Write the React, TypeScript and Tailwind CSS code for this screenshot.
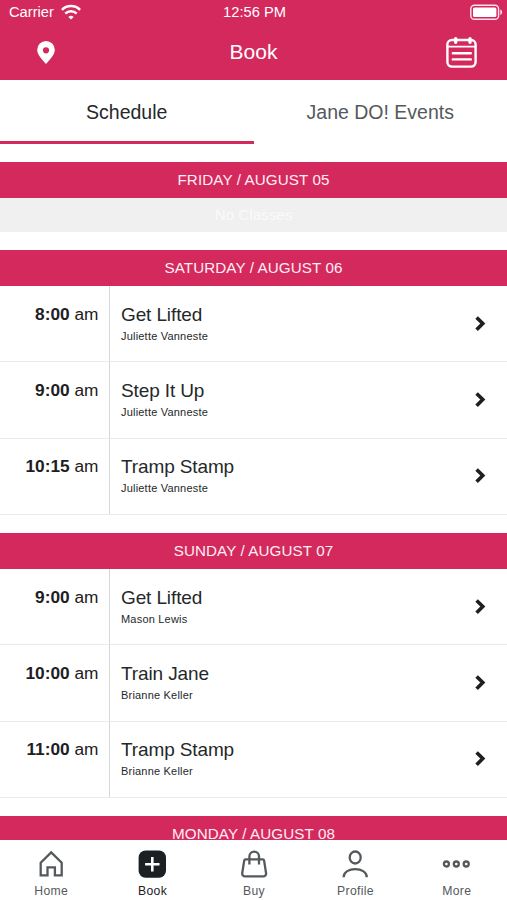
type ClassItem = {
    time: string;
    title: string;
    teacher: string;
}

type Day = {
    label: string;
    classes: ClassItem[];
}

const days: Day[] = [
    { label: 'FRIDAY / AUGUST 05', classes: [] },
    {
        label: 'SATURDAY / AUGUST 06',
        classes: [
            { time: '8:00', title: 'Get Lifted', teacher: 'Juliette Vanneste' },
            { time: '9:00', title: 'Step It Up', teacher: 'Juliette Vanneste' },
            { time: '10:15', title: 'Tramp Stamp', teacher: 'Juliette Vanneste' },
        ],
    },
    {
        label: 'SUNDAY / AUGUST 07',
        classes: [
            { time: '9:00', title: 'Get Lifted', teacher: 'Mason Lewis' },
            { time: '10:00', title: 'Train Jane', teacher: 'Brianne Keller' },
            { time: '11:00', title: 'Tramp Stamp', teacher: 'Brianne Keller' },
        ],
    },
]

function WifiIcon() {
    return (
        <svg className="w-5 h-4" viewBox="0 0 20 16" fill="none" stroke="white" strokeWidth="2.5">
            <path d="M0.9 5.8a13 13 0 0 1 18.2 0" />
            <path d="M4.3 9.6a8.1 8.1 0 0 1 11.4 0" />
            <path d="M10 15.6l-2.7-2.6a3.8 3.8 0 0 1 5.4 0z" fill="white" stroke="none" />
        </svg>
    )
}

function BatteryIcon() {
    return (
        <svg className="w-[33px] h-4" viewBox="0 0 33 16" fill="none">
            <rect x="0.8" y="1.3" width="27.8" height="14" rx="3.6" stroke="#ffe3ee" strokeWidth="1.4" />
            <rect x="3" y="3.5" width="23.4" height="9.6" rx="1.5" fill="white" />
            <path d="M30.3 5.5c2.4 0.8 2.4 4.6 0 5.4z" fill="#ffe3ee" />
        </svg>
    )
}

function PinIcon() {
    return (
        <svg className="w-[18px] h-[23px]" viewBox="0 0 18 23" fill="white" fillRule="evenodd">
            <path d="M9 0A8.8 8.8 0 0 0 .2 8.8C.2 14 5 18.5 9 23c4-4.5 8.8-9 8.8-14.2A8.8 8.8 0 0 0 9 0zM9 6.2a3.1 3.1 0 1 1 0 6.2a3.1 3.1 0 0 1 0-6.2z" />
        </svg>
    )
}

function CalendarIcon() {
    return (
        <svg className="w-[31px] h-[31px]" viewBox="0 0 31 31" fill="none" stroke="white" strokeWidth="2.4" strokeLinecap="round">
            <rect x="1.4" y="3" width="28.2" height="26.6" rx="4.5" />
            <path d="M1.4 9.6h28.2" strokeWidth="1.8" />
            <path d="M9.7 1.8v3.4M24 1.8v3.4" strokeWidth="3.4" />
            <path d="M6.8 16.2h18M6.8 22.4h18" />
        </svg>
    )
}

function ChevronIcon() {
    return (
        <svg className="w-3 h-4" viewBox="0 0 12 16" fill="none" stroke="#1d2023" strokeWidth="3.6">
            <path d="M1.6 1.4L7.8 7.6L1.6 13.8" />
        </svg>
    )
}

function StatusBar() {
    return (
        <div className="h-6 flex items-center justify-between pl-[9px] pr-1 text-[14.7px]">
            <div className="flex-1 flex items-center gap-[7px]">
                <span>Carrier</span>
                <WifiIcon />
            </div>
            <span className="pr-[3px]">12:56 PM</span>
            <div className="flex-1 flex justify-end">
                <BatteryIcon />
            </div>
        </div>
    )
}

function Header() {
    return (
        <header className="h-20 shrink-0 bg-[#d4295d] text-white">
            <StatusBar />
            <div className="h-14 flex items-center justify-between pl-[37px] pr-[30px]">
                <div className="flex-1">
                    <PinIcon />
                </div>
                <h1 className="text-[21px] pr-[7px]">Book</h1>
                <div className="flex-1 flex justify-end">
                    <CalendarIcon />
                </div>
            </div>
        </header>
    )
}

function Tabs() {
    return (
        <div className="h-16 shrink-0 flex text-[19.5px] text-center leading-[60px]">
            <button className="w-1/2 h-16 pt-0.5 border-b-[3px] border-[#d4295d] text-[#25282b]">Schedule</button>
            <button className="w-1/2 h-16 pt-0.5 border-b-[3px] border-transparent text-[#54595c]">Jane DO! Events</button>
        </div>
    )
}

function DayHeader({ label }: { label: string }) {
    return (
        <h2 className="h-9 bg-[#d4295d] text-[#ffeef4] text-center text-[15.2px] tracking-[0.1px] leading-9">{label}</h2>
    )
}

function ClassRow({ item }: { item: ClassItem }) {
    return (
        <div className="h-[76.2px] flex border-b border-[#e9eaeb]">
            <div className="w-[110px] pt-[14.5px] pr-[10.5px] border-r border-[#d5d8d9] text-right text-[17.3px] leading-[26px] text-[#1d2023]">
                <b>{item.time}</b> am
            </div>
            <div className="flex-1 pl-[11px] pt-[15.4px] text-[#25282b]">
                <div className="text-[19px] leading-[26px] tracking-[-0.12px]">{item.title}</div>
                <div className="text-[11px] leading-4 tracking-[0.2px]">{item.teacher}</div>
            </div>
            <div className="flex items-center pr-5">
                <ChevronIcon />
            </div>
        </div>
    )
}

function BottomNav() {
    const items = [
        {
            label: 'Home',
            icon: <path d="M4.7 12.8L15.2 2.4L25.7 12.8v12.6h-6.8v-8h-7.4v8H4.7z" />,
        },
        {
            label: 'Book',
            active: true,
            icon: (
                <>
                    <rect x="1.6" y="0.5" width="27.4" height="27.2" rx="7" fill="#1d2023" stroke="none" />
                    <path d="M15.3 7v14.4M8.1 14.2h14.4" stroke="white" strokeWidth="2.6" />
                </>
            ),
        },
        {
            label: 'Buy',
            icon: (
                <>
                    <path d="M6.8 9.4h16.8a1.5 1.5 0 0 1 1.5 1.2l2 12.8a2.8 2.8 0 0 1-2.8 3H6a2.8 2.8 0 0 1-2.8-3l2-12.8a1.5 1.5 0 0 1 1.6-1.2z" />
                    <path d="M10.4 14.5V6.5a4.8 4.8 0 0 1 9.6 0V14.5" />
                </>
            ),
        },
        {
            label: 'Profile',
            icon: (
                <>
                    <ellipse cx="15.2" cy="7.5" rx="5.5" ry="6" />
                    <path d="M3.6 27.2c0-10.8 23.2-10.8 23.2 0" />
                </>
            ),
        },
        {
            label: 'More',
            icon: (
                <>
                    <circle cx="5.4" cy="14" r="2.5" />
                    <circle cx="15.3" cy="14" r="2.5" />
                    <circle cx="25.2" cy="14" r="2.5" />
                </>
            ),
        },
    ]

    return (
        <nav className="h-[60px] shrink-0 flex bg-white">
            {items.map(item => (
                <button
                    key={item.label}
                    className={`flex-1 flex flex-col items-center pt-[9.5px] ${item.active ? 'text-[#1d2023]' : 'text-[#54595c]'}`}
                >
                    <svg className="w-[30px] h-[30px]" viewBox="0 0 30 30" fill="none" stroke="#54595c" strokeWidth="2.3">
                        {item.icon}
                    </svg>
                    <span className="text-[12.2px] leading-4 mt-[3px] pl-px tracking-[0.3px]">{item.label}</span>
                </button>
            ))}
        </nav>
    )
}

function App() {
    return (
        <div className="w-[507px] h-[900px] flex flex-col overflow-hidden bg-white font-['Liberation_Sans',Arial,sans-serif]">
            <Header />
            <Tabs />
            <main className="flex-1 min-h-0 overflow-hidden pt-[18px] flex flex-col gap-[18.3px]">
                {days.map(day => (
                    <section key={day.label}>
                        <DayHeader label={day.label} />
                        {day.classes.map(item => <ClassRow key={item.time} item={item} />)}
                        {day.classes.length === 0 &&
                            <div className="h-[34px] bg-[#f0f0f0] text-[#fafafa] text-center text-[15.2px] leading-[34px]">No Classes</div>
                        }
                    </section>
                ))}
                <section>
                    <DayHeader label="MONDAY / AUGUST 08" />
                </section>
            </main>
            <BottomNav />
        </div>
    )
}

export default App;
